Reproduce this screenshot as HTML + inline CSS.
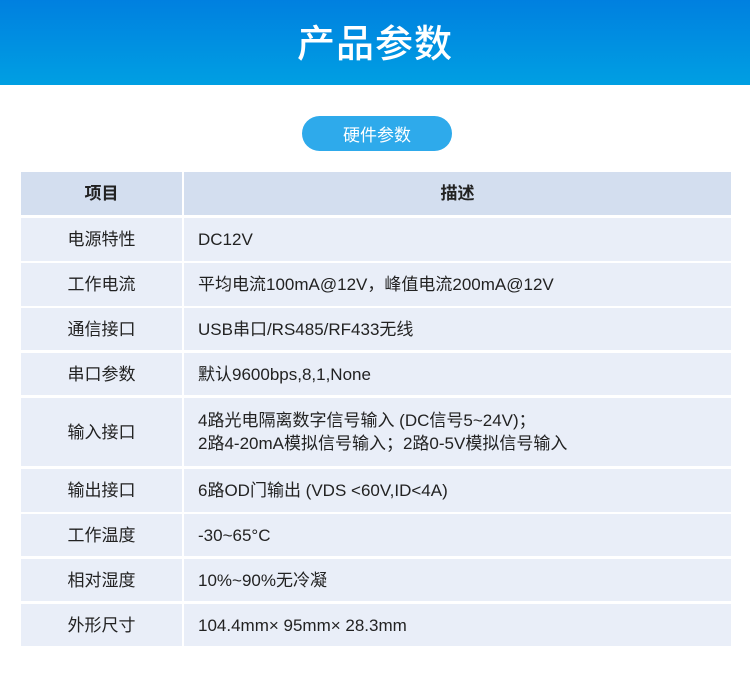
<!DOCTYPE html>
<html><head><meta charset="utf-8"><style>
*{margin:0;padding:0;box-sizing:border-box}
body{width:750px;height:676px;background:#fff;position:relative;overflow:hidden;font-family:"Liberation Sans","Noto Sans CJK SC",sans-serif;color:#222}
.hd{position:absolute;left:0;top:0;width:750px;height:85px;background:linear-gradient(#0080e0,#009fe2);color:#fff;font-family:"Noto Sans CJK SC",sans-serif;font-size:38px;font-weight:500;text-align:center;line-height:82px;letter-spacing:1px}
.pill{position:absolute;left:302px;top:116px;width:150px;height:35px;border-radius:18px;background:#2eaaeb;color:#fff;font-family:"Noto Sans CJK SC",sans-serif;font-size:17px;text-align:center;line-height:35px}
.r{position:absolute;left:21px;width:710px;background:#e9eef8}
.r div{position:absolute;top:0;height:100%;display:flex;align-items:center;font-size:17px;line-height:23px}
.a{left:0;width:161px;justify-content:center}
.b{left:163px;right:0;padding-left:14px;background:#e9eef8}
.r:before{content:"";position:absolute;left:161px;top:0;width:2px;height:100%;background:#fff}
.h{background:#d3deef}
.h .b{background:#d3deef;padding-left:0;justify-content:center;font-weight:bold}
.h .a{font-weight:bold}
</style></head><body>
<div class="hd">产品参数</div>
<div class="pill">硬件参数</div>
<div class="r h" style="top:172px;height:43px"><div class="a">项目</div><div class="b">描述</div></div>
<div class="r" style="top:218px;height:43px"><div class="a">电源特性</div><div class="b">DC12V</div></div>
<div class="r" style="top:263px;height:43px"><div class="a">工作电流</div><div class="b">平均电流100mA@12V，峰值电流200mA@12V</div></div>
<div class="r" style="top:308px;height:42px"><div class="a">通信接口</div><div class="b">USB串口/RS485/RF433无线</div></div>
<div class="r" style="top:353px;height:42px"><div class="a">串口参数</div><div class="b">默认9600bps,8,1,None</div></div>
<div class="r" style="top:398px;height:68px"><div class="a">输入接口</div><div class="b">4路光电隔离数字信号输入 (DC信号5~24V)；<br>2路4-20mA模拟信号输入；2路0-5V模拟信号输入</div></div>
<div class="r" style="top:469px;height:43px"><div class="a">输出接口</div><div class="b">6路OD门输出 (VDS &lt;60V,ID&lt;4A)</div></div>
<div class="r" style="top:514px;height:42px"><div class="a">工作温度</div><div class="b">-30~65°C</div></div>
<div class="r" style="top:559px;height:42px"><div class="a">相对湿度</div><div class="b">10%~90%无冷凝</div></div>
<div class="r" style="top:604px;height:42px"><div class="a">外形尺寸</div><div class="b">104.4mm× 95mm× 28.3mm</div></div>
</body></html>
